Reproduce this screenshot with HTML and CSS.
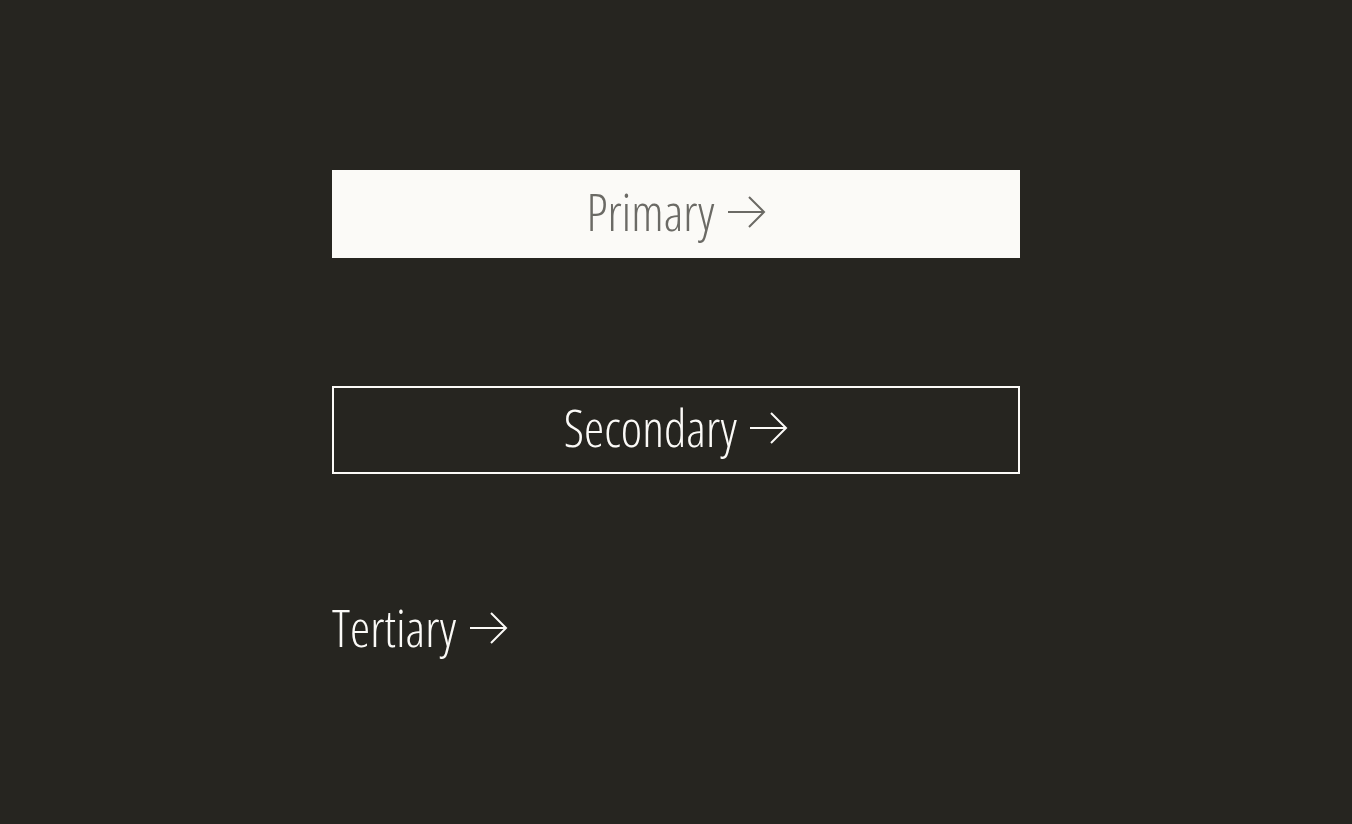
FILE: index.html
```html
<!DOCTYPE html>
<html lang="en">
<head>
<meta charset="utf-8">
<title>Buttons</title>
<link rel="stylesheet" href="styles.css">
</head>
<body>
<main class="stack">
  <a class="btn btn-primary" href="#">
    <span class="label">Primary</span>
    <svg class="arrow" viewBox="0 0 38 32" width="38" height="32"><path d="M0 16H36M21 1L36 16L21 31"/></svg>
  </a>
  <a class="btn btn-secondary" href="#">
    <span class="label">Secondary</span>
    <svg class="arrow" viewBox="0 0 38 32" width="38" height="32"><path d="M0 16H36M21 1L36 16L21 31"/></svg>
  </a>
  <a class="btn btn-tertiary" href="#">
    <span class="label">Tertiary</span>
    <svg class="arrow" viewBox="0 0 38 32" width="38" height="32"><path d="M0 16H36M21 1L36 16L21 31"/></svg>
  </a>
</main>
</body>
</html>
```
FILE: styles.css
```css
html, body {
  margin: 0;
  height: 100%;
  background: #262520;
}
.stack {
  display: flex;
  flex-direction: column;
  gap: 128px;
  width: 688px;
  padding: 170px 0 0 332px;
}
.btn {
  display: flex;
  align-items: center;
  justify-content: center;
  gap: 13px;
  height: 88px;
  padding-bottom: 5px;
  box-sizing: border-box;
  text-decoration: none;
  font-family: "Open Sans", sans-serif;
  font-weight: 300;
  font-stretch: 75%;
  font-size: 51px;
  line-height: 1;
  color: #fbfaf7;
}
.btn-primary {
  background: #fbfaf7;
  color: #6b6a65;
}
.btn-secondary {
  border: 2px solid #fbfaf7;
}
.btn-tertiary {
  justify-content: flex-start;
  margin-top: -16px;
}
.arrow {
  flex: none;
  fill: none;
  stroke: currentColor;
  stroke-width: 2;
}
```
